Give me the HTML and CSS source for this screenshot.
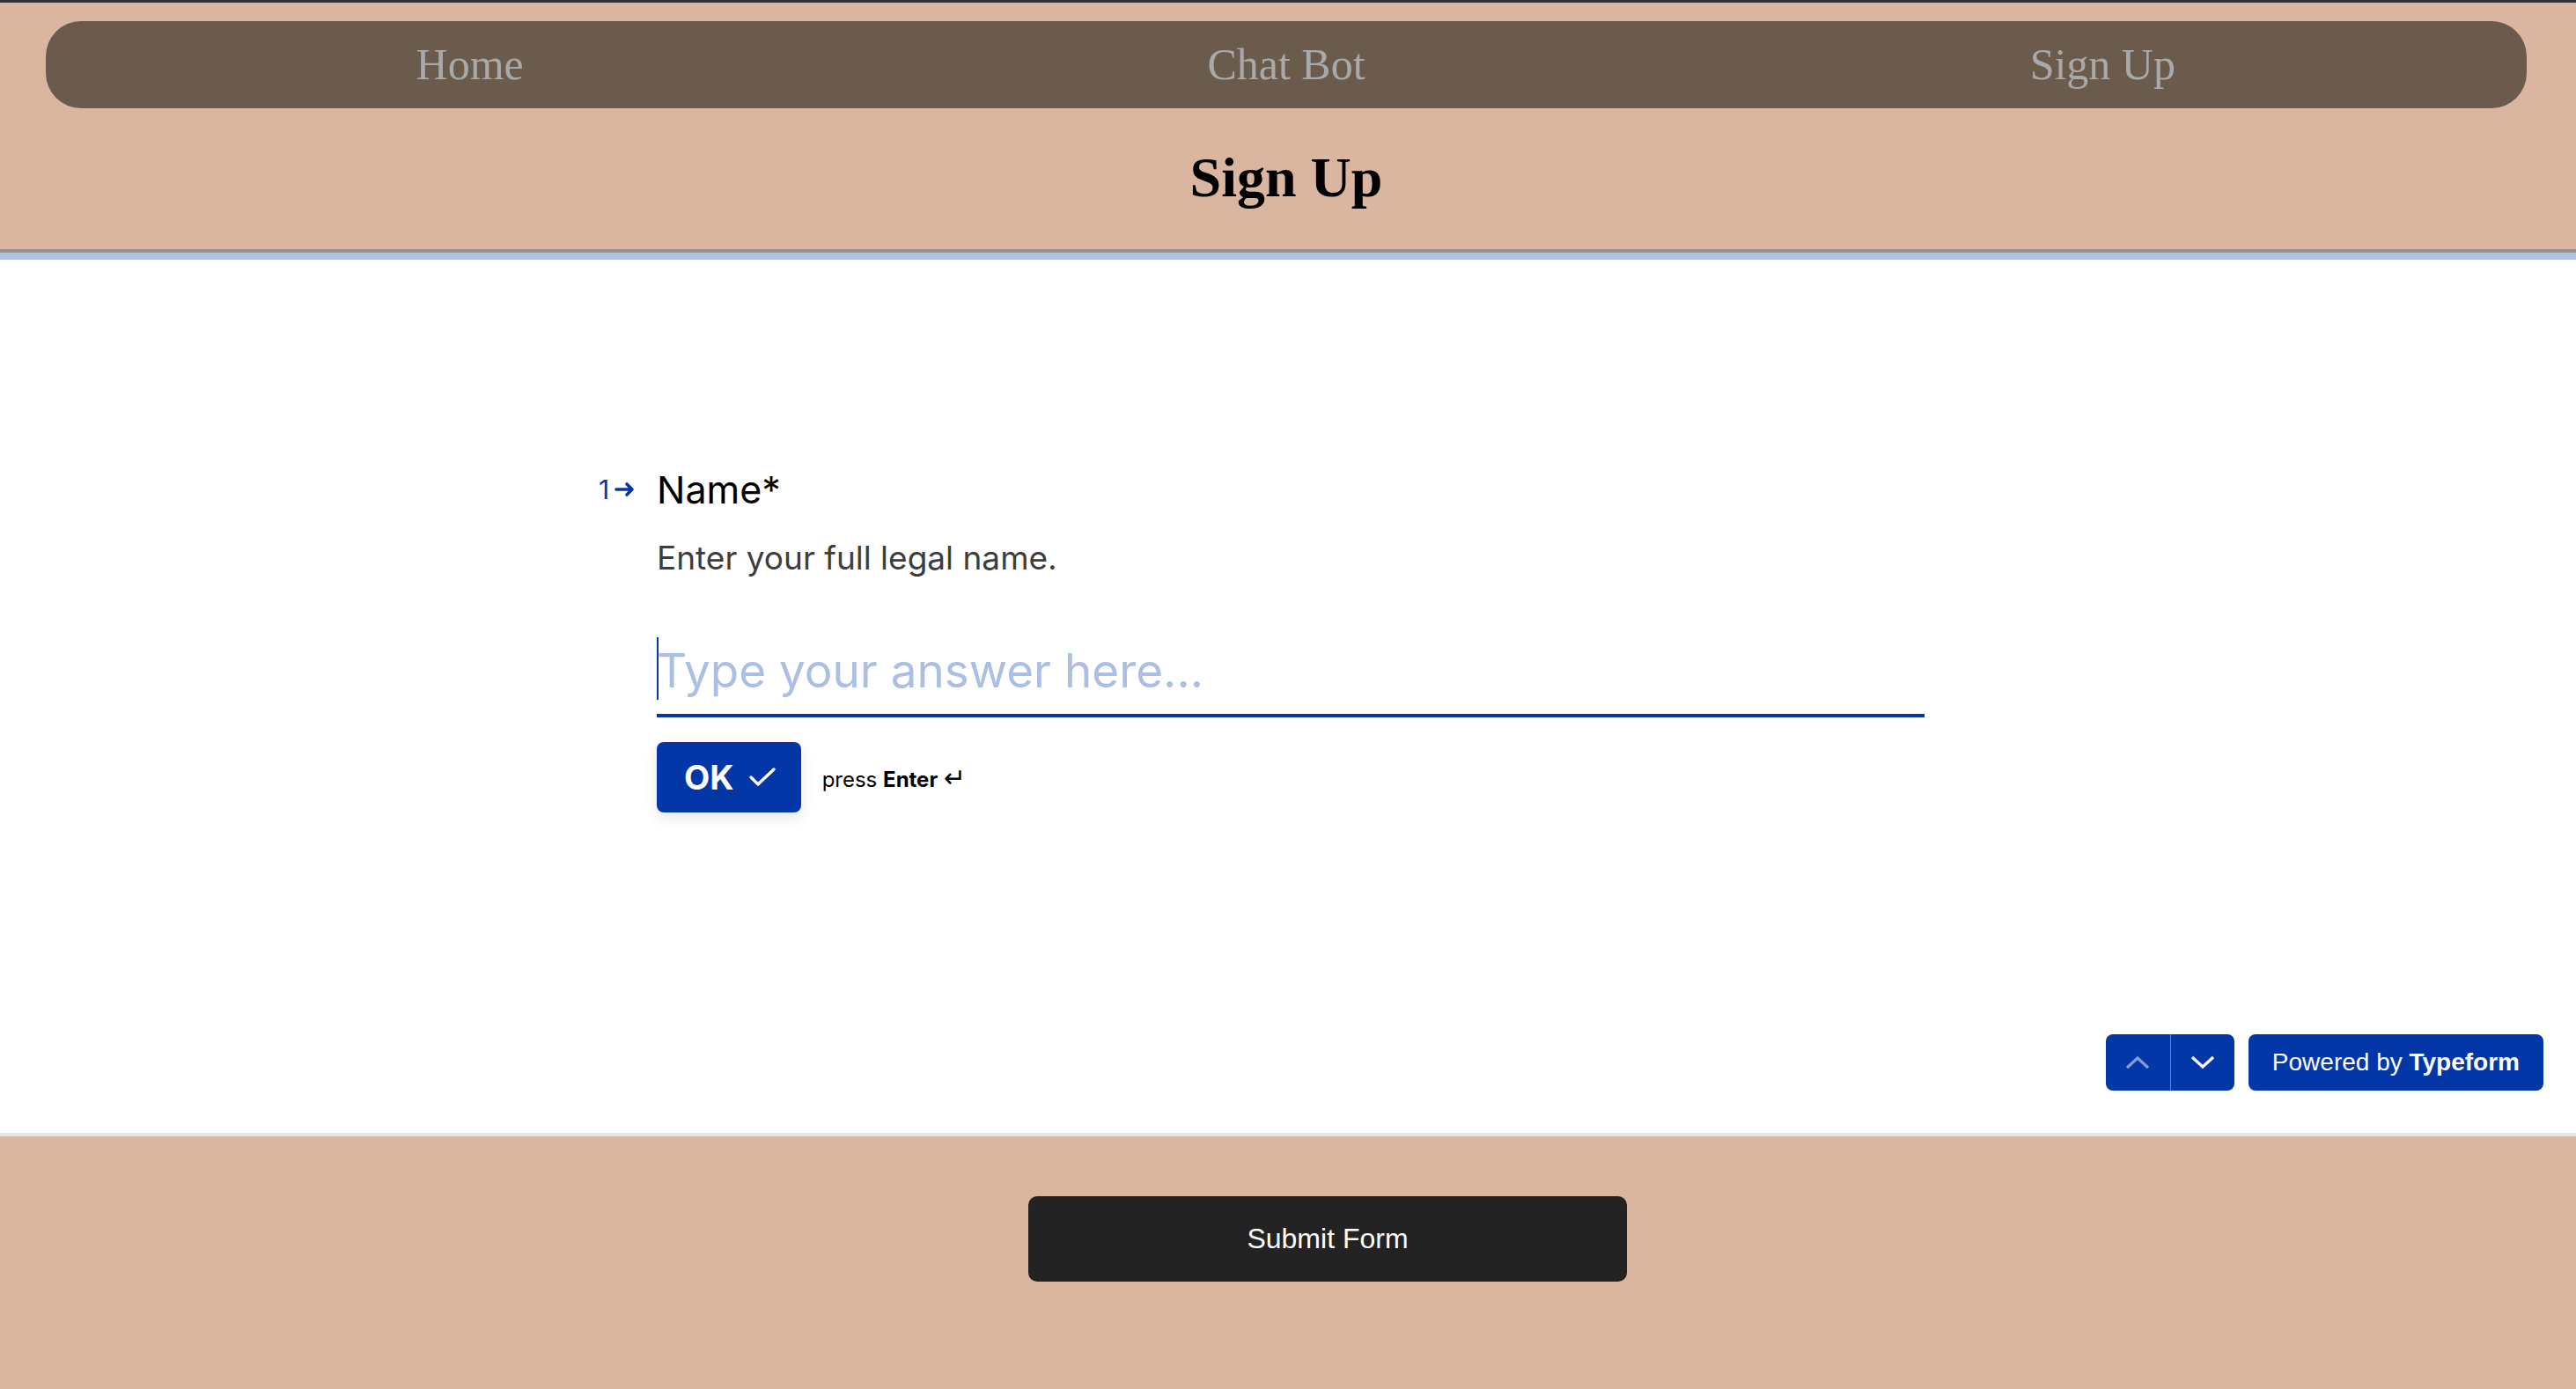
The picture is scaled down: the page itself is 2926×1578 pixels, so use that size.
FILE: index.html
```html
<!DOCTYPE html>
<html lang="en">
  <head>
    <meta charset="UTF-8" />
    <meta name="viewport" content="width=device-width, initial-scale=1.0" />
    <title>Sign Up</title>
    <link rel="stylesheet" href="styles.css">
  </head>
  <body>
    <header class="site-header">
      <nav class="main-nav">
        <a href="#">Home</a>
        <a href="#">Chat Bot</a>
        <a href="#">Sign Up</a>
      </nav>
      <h1 class="page-title">Sign Up</h1>
    </header>

    <section class="form-embed">
      <div class="progress"></div>

      <div class="question-area">
        <div class="question">
          <div class="q-head">
            <span class="q-num">1
              <svg class="q-arrow" width="24" height="18" viewBox="0 0 24 18">
                <path d="M2 9h18M14 3l6 6-6 6" fill="none" stroke="#0336a7" stroke-width="3.6" stroke-linecap="round" stroke-linejoin="round" />
              </svg>
            </span>
            <span class="q-title">Name*</span>
          </div>
          <p class="q-desc">Enter your full legal name.</p>

          <div class="answer">
            <span class="caret"></span>
            <input type="text" placeholder="Type your answer here..." />
          </div>

          <div class="actions">
            <button class="ok-btn">OK
              <svg width="32" height="24" viewBox="0 0 32 24">
                <path d="M3 12l8 8L29 3" fill="none" stroke="#fff" stroke-width="3.4" stroke-linecap="round" stroke-linejoin="round" />
              </svg>
            </button>
            <span class="hint">press <b>Enter</b> <span class="enter-key">&#8629;</span></span>
          </div>
        </div>

        <div class="tf-footer">
          <div class="step-btns">
            <button class="step-btn disabled">
              <svg width="28" height="16" viewBox="0 0 28 16">
                <path d="M2 14L14 3l12 11" fill="none" stroke="#fff" stroke-width="3.4" />
              </svg>
            </button>
            <button class="step-btn">
              <svg width="28" height="16" viewBox="0 0 28 16">
                <path d="M2 2l12 11L26 2" fill="none" stroke="#fff" stroke-width="3.4" />
              </svg>
            </button>
          </div>
          <a class="powered" href="#">Powered by <b>Typeform</b></a>
        </div>
      </div>
    </section>

    <footer class="submit-area">
      <button class="submit-btn">Submit Form</button>
    </footer>
  </body>
</html>
```

FILE: styles.css
```css
* {
  margin: 0;
  padding: 0;
  box-sizing: border-box;
}

body {
  background: #dab6a1;
  font-family: "Liberation Serif", serif;
  height: 1578px;
  overflow: hidden;
}

.site-header {
  background: #dab6a1;
  border-top: 3px solid #303036;
  border-bottom: 4px solid #939393;
  padding: 21px 56px 45px 52px;
}

.main-nav {
  display: grid;
  grid-template-columns: 1fr 1fr 1fr;
  height: 99px;
  padding: 0 18px;
  background: #6b5b4d;
  border-radius: 40px;
}

.main-nav a {
  text-align: center;
  line-height: 99px;
  font-size: 50px;
  color: #a9a9a9;
  text-decoration: none;
}

.page-title {
  margin-top: 43px;
  text-align: center;
  font-size: 64px;
  line-height: 72px;
  font-weight: bold;
  color: #000;
}

/* typeform embed */
.form-embed {
  background: #fff;
  border-bottom: 4px solid #e5e5e5;
}

.progress {
  height: 8px;
  background: #aec0e4;
}

.question-area {
  display: flex;
  flex-direction: column;
  height: 992px;
  padding: 233px 0 48px 6px;
  font-family: Inter, "Liberation Sans", sans-serif;
}

.question {
  width: 1440px;
  margin: 0 auto;
}

.q-head {
  display: flex;
  align-items: flex-start;
  margin-left: -66px;
}

.q-num {
  display: flex;
  align-items: center;
  gap: 6px;
  width: 66px;
  height: 56px;
  font-size: 30px;
  color: #0336a7;
}

.q-title {
  font-size: 43px;
  line-height: 56px;
  color: #000;
}

.q-desc {
  margin-top: 26px;
  font-size: 37px;
  line-height: 48px;
  color: #3d3d3d;
}

.answer {
  position: relative;
  margin-top: 68px;
  padding-bottom: 13px;
  border-bottom: 4px solid #0336a7;
}

.answer input {
  display: block;
  width: 100%;
  height: 72px;
  border: none;
  outline: none;
  background: transparent;
  font-family: Inter, "Liberation Sans", sans-serif;
  font-size: 53px;
  color: #0336a7;
}

.answer input::placeholder {
  color: #abbee3;
}

.caret {
  position: absolute;
  left: 0;
  top: -2px;
  width: 2px;
  height: 71px;
  background: #0336a7;
}

.actions {
  display: flex;
  align-items: center;
  gap: 24px;
  margin-top: 28px;
}

.ok-btn {
  display: flex;
  align-items: center;
  gap: 16px;
  height: 80px;
  padding: 0 28px 0 31px;
  border: none;
  border-radius: 8px;
  background: #0336a7;
  color: #fff;
  font-family: Inter, "Liberation Sans", sans-serif;
  font-size: 38px;
  font-weight: bold;
  box-shadow: 0 6px 16px rgba(0, 0, 0, 0.1);
}

.hint {
  font-size: 24px;
  color: #000;
  margin-top: 4px;
}

.enter-key {
  font-family: "DejaVu Sans", sans-serif;
  font-size: 30px;
  line-height: 24px;
}

.tf-footer {
  display: flex;
  justify-content: flex-end;
  align-items: center;
  gap: 16px;
  margin-top: auto;
  padding-right: 37px;
}

.step-btns {
  display: flex;
  border-radius: 8px;
  overflow: hidden;
}

.step-btn {
  display: flex;
  align-items: center;
  justify-content: center;
  width: 73px;
  height: 64px;
  border: none;
  background: #0336a7;
}

.step-btn + .step-btn {
  border-left: 1px solid #6a84cc;
}

.step-btn.disabled svg {
  opacity: 0.5;
}

.powered {
  display: block;
  height: 64px;
  padding: 0 27px;
  border-radius: 8px;
  background: #0336a7;
  color: #fff;
  font-family: "Liberation Sans", sans-serif;
  font-size: 28px;
  line-height: 64px;
  text-decoration: none;
}

/* submit */
.submit-area {
  display: flex;
  justify-content: center;
  padding: 68px 0 0 90px;
}

.submit-btn {
  width: 680px;
  height: 97px;
  border: none;
  border-radius: 10px;
  background: #232323;
  color: #fff;
  font-family: "Liberation Sans", sans-serif;
  font-size: 32px;
}
```
